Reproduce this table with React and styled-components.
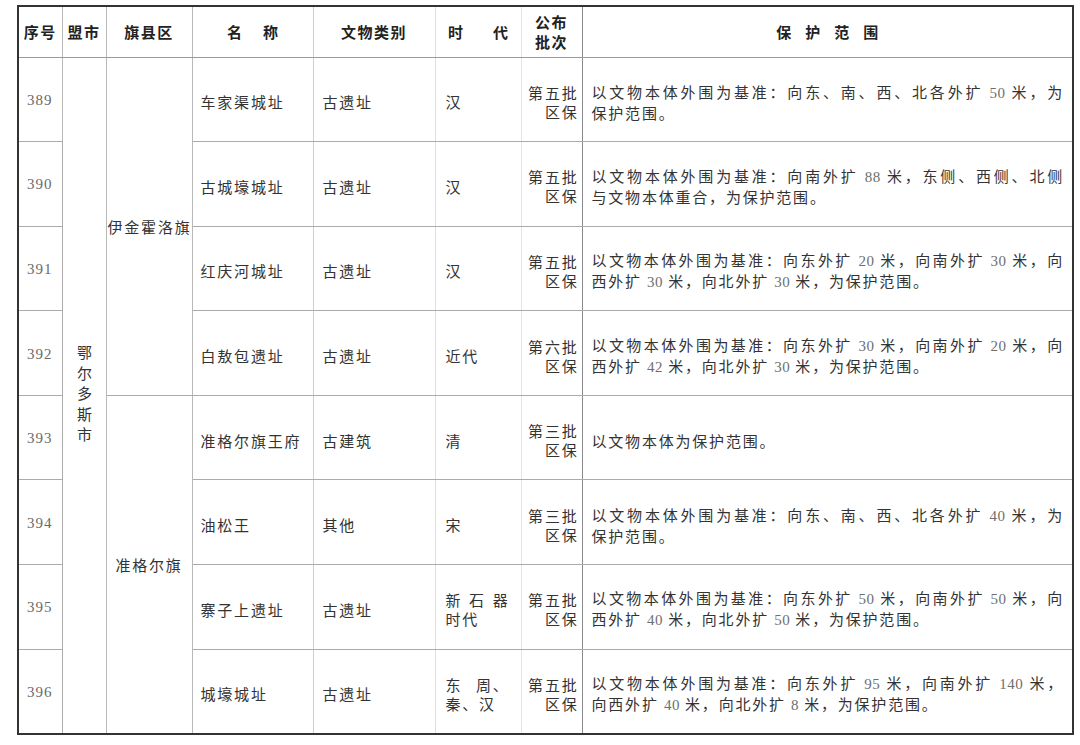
import React from "react";
import styled, { createGlobalStyle } from "styled-components";

const rows = [
  {
    no: "389",
    name: "车家渠城址",
    type: "古遗址",
    era: [["汉"]],
    batch: "第五批",
    range: ["以文物本体外围为基准：向东、南、西、北各外扩 50 米，为", "保护范围。"],
  },
  {
    no: "390",
    name: "古城壕城址",
    type: "古遗址",
    era: [["汉"]],
    batch: "第五批",
    range: ["以文物本体外围为基准：向南外扩 88 米，东侧、西侧、北侧", "与文物本体重合，为保护范围。"],
  },
  {
    no: "391",
    name: "红庆河城址",
    type: "古遗址",
    era: [["汉"]],
    batch: "第五批",
    range: ["以文物本体外围为基准：向东外扩 20 米，向南外扩 30 米，向", "西外扩 30 米，向北外扩 30 米，为保护范围。"],
  },
  {
    no: "392",
    name: "白敖包遗址",
    type: "古遗址",
    era: [["近代"]],
    batch: "第六批",
    range: ["以文物本体外围为基准：向东外扩 30 米，向南外扩 20 米，向", "西外扩 42 米，向北外扩 30 米，为保护范围。"],
  },
  {
    no: "393",
    name: "准格尔旗王府",
    type: "古建筑",
    era: [["清"]],
    batch: "第三批",
    range: ["以文物本体为保护范围。"],
  },
  {
    no: "394",
    name: "油松王",
    type: "其他",
    era: [["宋"]],
    batch: "第三批",
    range: ["以文物本体外围为基准：向东、南、西、北各外扩 40 米，为", "保护范围。"],
  },
  {
    no: "395",
    name: "寨子上遗址",
    type: "古遗址",
    era: [["新", "石", "器"], ["时代"]],
    batch: "第五批",
    range: ["以文物本体外围为基准：向东外扩 50 米，向南外扩 50 米，向", "西外扩 40 米，向北外扩 50 米，为保护范围。"],
  },
  {
    no: "396",
    name: "城壕城址",
    type: "古遗址",
    era: [["东", "周、"], ["秦、汉"]],
    batch: "第五批",
    range: ["以文物本体外围为基准：向东外扩 95 米，向南外扩 140 米，", "向西外扩 40 米，向北外扩 8 米，为保护范围。"],
  },
];

const widths = [44, 44, 86, 121, 122, 86, 61, 491];

function withNumbers(text) {
  return text.split(/(\d+)/).map((part, i) =>
    /^\d+$/.test(part) ? <Num key={i}>{part}</Num> : part
  );
}

export default function App() {
  return (
    <Page>
      <GlobalStyle />
      <Table>
        <colgroup>
          {widths.map((w, i) => (
            <Col key={i} $w={w} />
          ))}
        </colgroup>
        <thead>
          <HeadRow>
            <Th $edge="#b8b8b8">序号</Th>
            <Th $edge="#b8b8b8">盟市</Th>
            <Th $edge="#b8b8b8">旗县区</Th>
            <Th $edge="#cfcfcf">
              <Spread $gap={21}>名称</Spread>
            </Th>
            <Th $edge="#dedede">文物类别</Th>
            <Th $edge="#e4e4e4">
              <Spread $gap={30}>时代</Spread>
            </Th>
            <Th $edge="#8a8a8a">
              公布
              <br />
              批次
            </Th>
            <Th>
              <Spread $gap={14}>保护范围</Spread>
            </Th>
          </HeadRow>
        </thead>
        <tbody>
          {rows.map((r, i) => (
            <BodyRow key={r.no}>
              <Td $edge="#b8b8b8" $pad="0 0 0 8px">
                <Serial>{r.no}</Serial>
              </Td>
              {i === 0 && (
                <Td rowSpan={8} $edge="#b8b8b8" $align="center" $pad="6px 0 0">
                  <Vertical>鄂尔多斯市</Vertical>
                </Td>
              )}
              {i === 0 && (
                <Td rowSpan={4} $edge="#b8b8b8" $align="center" $pad="0 0 0 1px">
                  伊金霍洛旗
                </Td>
              )}
              {i === 4 && (
                <Td rowSpan={4} $edge="#b8b8b8" $align="center" $pad="0">
                  准格尔旗
                </Td>
              )}
              <Td $edge="#cfcfcf" $pad="5px 0 0 8px">
                {r.name}
              </Td>
              <Td $edge="#dedede" $pad="5px 0 0 9px">
                {r.type}
              </Td>
              <Td $edge="#e4e4e4" $pad="5px 11px 0 10px">
                {r.era.map((parts, j) => (
                  <EraLine key={j} $spread={parts.length > 1}>
                    {parts.map((p, k) => (
                      <span key={k}>{p}</span>
                    ))}
                  </EraLine>
                ))}
              </Td>
              <Td $edge="#8a8a8a" $align="right" $pad="5px 3px 0 0">
                {r.batch}
                <br />
                区保
              </Td>
              <Td $pad="5px 8px 0 9px">
                {r.range.map((line, j) => (
                  <RangeLine key={j} $full={j < r.range.length - 1}>
                    {withNumbers(line)}
                  </RangeLine>
                ))}
              </Td>
            </BodyRow>
          ))}
        </tbody>
      </Table>
    </Page>
  );
}

const GlobalStyle = createGlobalStyle`
  html, body {
    margin: 0;
    padding: 0;
    background: #ffffff;
  }
  body {
    font-family: "Noto Sans CJK SC", "Noto Sans", sans-serif;
    color: #333333;
  }
`;

const Page = styled.div`
  padding: 5px 0 0 17px;
`;

const Table = styled.table`
  border-collapse: collapse;
  table-layout: fixed;
  width: 1057px;
  border: 2px solid #333333;
`;

const Col = styled.col`
  width: ${({ $w }) => $w}px;
`;

const HeadRow = styled.tr`
  height: 51px;
`;

const BodyRow = styled.tr`
  height: 84.6px;
`;

const Th = styled.th`
  border: 1px solid #a8a8a8;
  border-right-color: ${({ $edge }) => $edge || "#a8a8a8"};
  border-bottom-color: #9a9a9a;
  padding: 0;
  font-size: 15px;
  font-weight: 700;
  letter-spacing: 1.5px;
  line-height: 20px;
  color: #222222;
  text-align: center;
  vertical-align: middle;
`;

const Spread = styled.span`
  display: inline-block;
  letter-spacing: ${({ $gap }) => $gap}px;
  margin-right: -${({ $gap }) => $gap}px;
`;

const Td = styled.td`
  border: 1px solid #ababab;
  border-right-color: ${({ $edge }) => $edge || "#ababab"};
  padding: ${({ $pad }) => $pad || "5px 8px 0"};
  font-size: 15px;
  letter-spacing: 1.8px;
  line-height: 19px;
  color: #333333;
  text-align: ${({ $align }) => $align || "left"};
  vertical-align: middle;
  overflow: hidden;
`;

const Serial = styled.span`
  font-family: "Liberation Serif", "DejaVu Serif", serif;
  font-size: 15px;
  letter-spacing: 1px;
  color: #6a6a6a;
`;

const Vertical = styled.span`
  display: inline-block;
  writing-mode: vertical-rl;
  text-orientation: upright;
  letter-spacing: 5.5px;
  line-height: 16px;
`;

const EraLine = styled.div`
  display: flex;
  justify-content: ${({ $spread }) => ($spread ? "space-between" : "flex-start")};
`;

const RangeLine = styled.div`
  text-align: ${({ $full }) => ($full ? "justify" : "left")};
  text-align-last: ${({ $full }) => ($full ? "justify" : "auto")};
`;

const Num = styled.span`
  font-family: "Liberation Serif", "DejaVu Serif", serif;
  letter-spacing: 0.5px;
  color: #6e6e6e;
`;
